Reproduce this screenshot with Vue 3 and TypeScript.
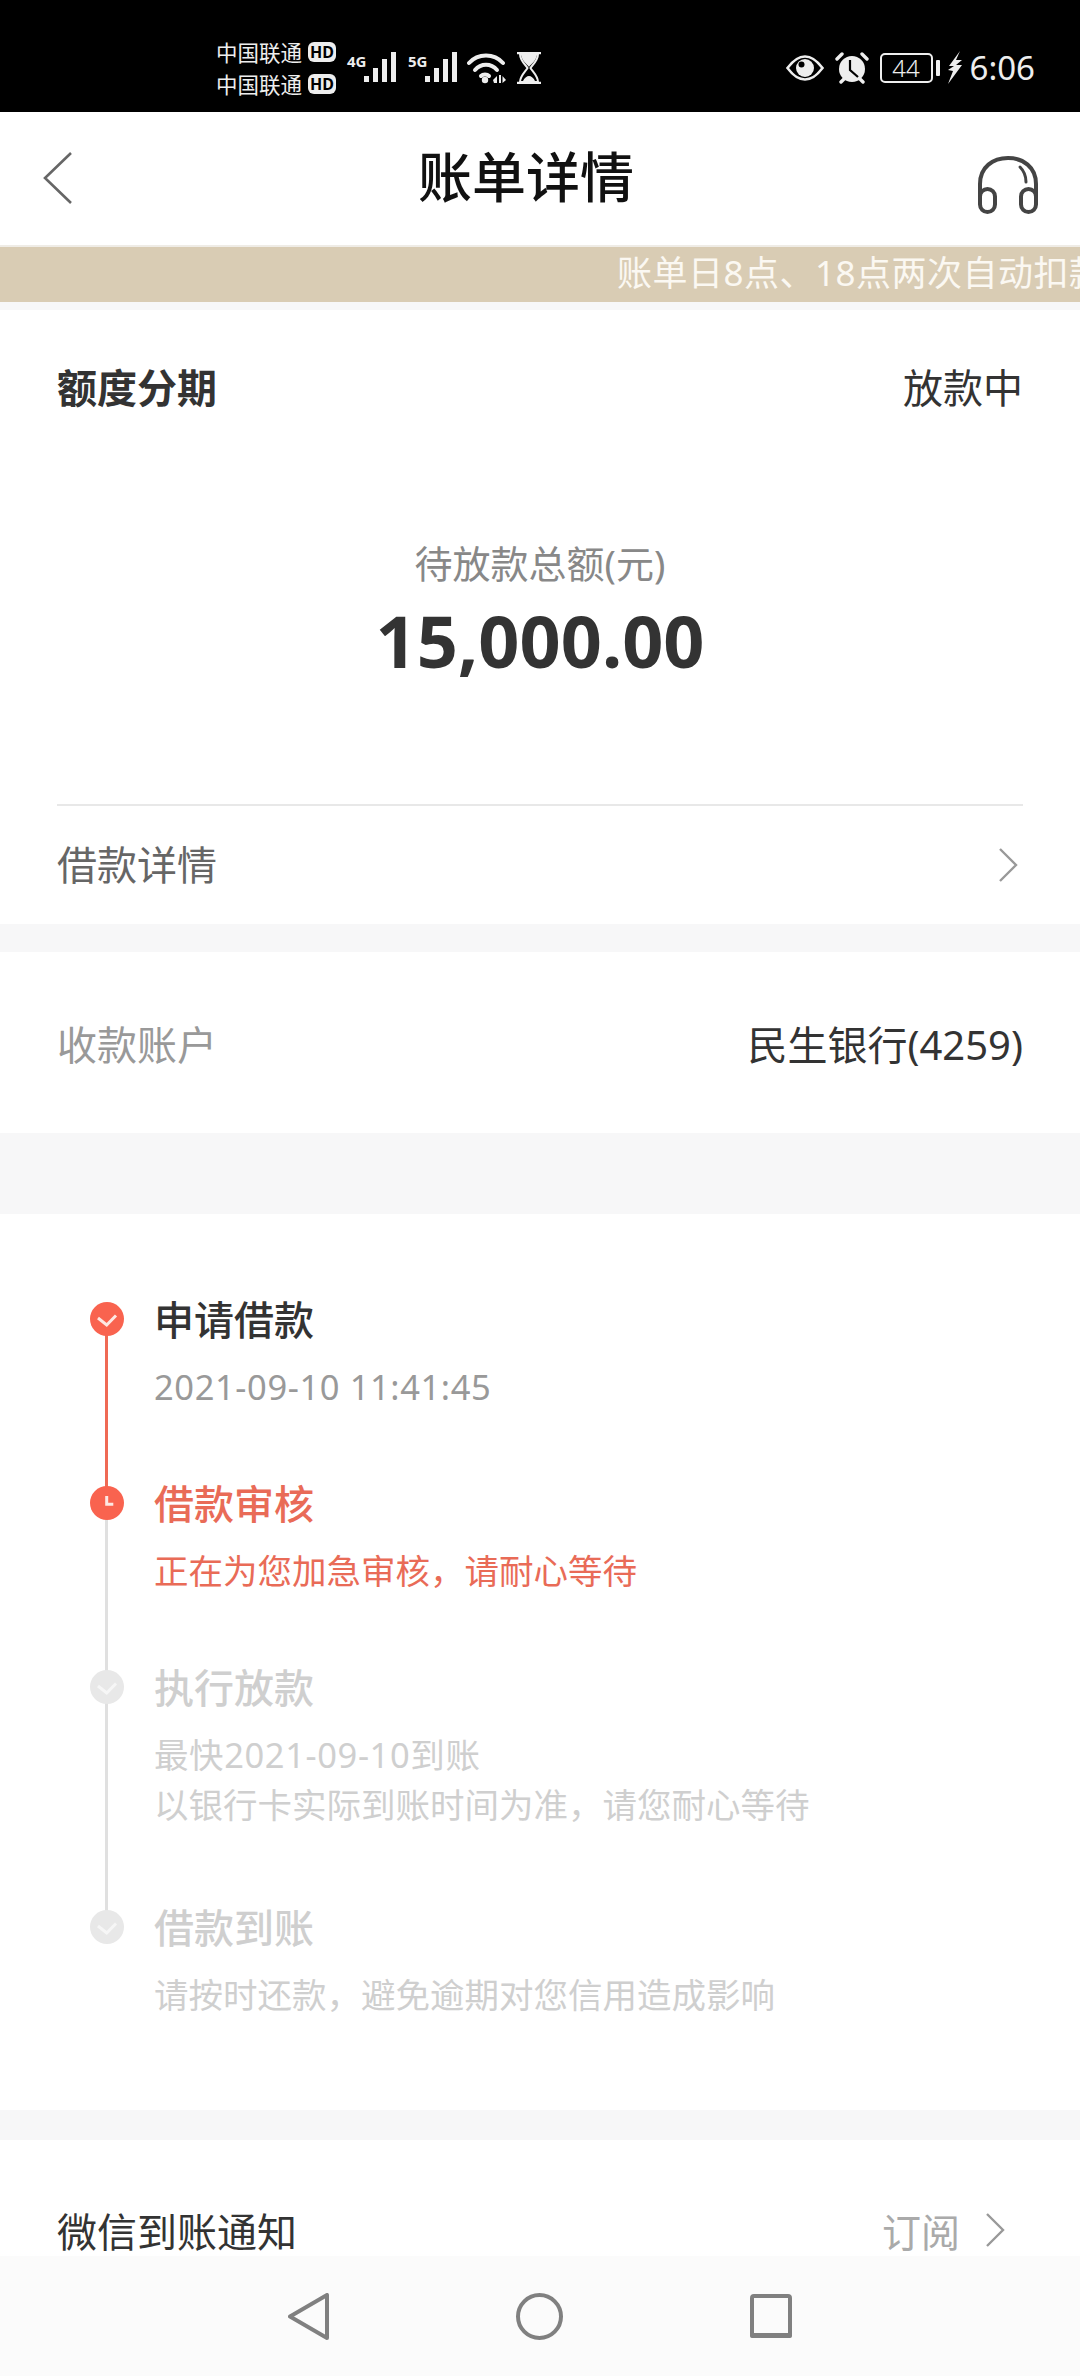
<script setup lang="ts">
interface Step { title: string; lines: string[]; state: 'done' | 'active' | 'todo'; pad: number; lineClass: string }
const steps: Step[] = [
  { title: '申请借款', lines: ['2021-09-10 11:41:45'], state: 'done', pad: 67, lineClass: 'red' },
  { title: '借款审核', lines: ['正在为您加急审核，请耐心等待'], state: 'active', pad: 67, lineClass: 'grey' },
  { title: '执行放款', lines: ['最快2021-09-10到账', '以银行卡实际到账时间为准，请您耐心等待'], state: 'todo', pad: 73, lineClass: 'grey' },
  { title: '借款到账', lines: ['请按时还款，避免逾期对您信用造成影响'], state: 'todo', pad: 0, lineClass: '' },
]
const hasDigits = (s: string): boolean => /\d/.test(s)
</script>

<template>
  <div class="screen">
    <div class="status">
      <div class="carriers">
        <div class="carrier">中国联通<span class="hd">HD</span></div>
        <div class="carrier">中国联通<span class="hd">HD</span></div>
      </div>
      <div class="net">
        <span class="gen">4G</span>
        <svg width="34" height="32" viewBox="0 0 34 32"><g fill="#eee"><rect x="0" y="24" width="5" height="6"/><rect x="9" y="16" width="5" height="14"/><rect x="18" y="7" width="5" height="23"/><rect x="27" y="0" width="5" height="30"/></g></svg>
      </div>
      <div class="net second">
        <span class="gen">5G</span>
        <svg width="34" height="32" viewBox="0 0 34 32"><g fill="#eee"><rect x="0" y="24" width="5" height="6"/><rect x="9" y="16" width="5" height="14"/><rect x="18" y="7" width="5" height="23"/><rect x="27" y="0" width="5" height="30"/></g></svg>
      </div>
      <svg class="wifi" width="40" height="32" viewBox="0 0 40 32">
        <g fill="none" stroke="#eee" stroke-width="4" stroke-linecap="round">
          <path d="M2 11 C11 1 27 1 36 11"/><path d="M8 18 C14 11 24 11 30 18"/><path d="M14 24 C16 22 20 22 22 24"/>
        </g>
        <circle cx="18" cy="28" r="3.2" fill="#eee"/>
        <path d="M26 28 L30 24 V31 H27 Z M32 23 H34 V31 H32 Z M35.500 24 L39 28 L35.500 31 Z" fill="#eee"/>
      </svg>
      <svg class="glass" width="24" height="32" viewBox="0 0 24 32">
        <path d="M0 1 H24 M0 31 H24" stroke="#eee" stroke-width="2.4"/>
        <path d="M3 2 H21 C21 9 15 13 13.500 16 C15 19 21 24 21 30 H3 C3 24 9 19 10.500 16 C9 13 3 9 3 2 Z" fill="none" stroke="#eee" stroke-width="2"/>
        <path d="M4 3 H20 C19 9 14 12 12 15 C10 12 5 9 4 3 Z M6 29 C7 26 10 24 12 24 C14 24 17 26 18 29 Z" fill="#eee"/>
      </svg>
      <div class="spacer"></div>
      <svg class="eye" width="38" height="26" viewBox="0 0 38 26">
        <path d="M1.500 13 C9 3 14 1.500 19 1.500 C24 1.500 29 3 36.500 13 C29 23 24 24.500 19 24.500 C14 24.500 9 23 1.500 13 Z" fill="none" stroke="#eee" stroke-width="2.6"/>
        <circle cx="19" cy="13" r="9" fill="#eee"/><circle cx="15.500" cy="9.500" r="3" fill="#000"/>
      </svg>
      <svg class="alarm" width="36" height="32" viewBox="0 0 36 32">
        <circle cx="18" cy="17" r="13" fill="#eee"/>
        <path d="M3 7 L8 2 M33 7 L28 2 M7 30 L10 27 M29 30 L26 27" stroke="#eee" stroke-width="3.4" stroke-linecap="round"/>
        <path d="M16 8 V18 L24 25" fill="none" stroke="#000" stroke-width="2.2"/>
      </svg>
      <div class="battery"><span class="level">44</span></div>
      <span class="nub"></span>
      <svg class="bolt" width="16" height="34" viewBox="0 0 16 34"><path d="M13 0 L2 15 L7 15 L1 19 L6 20 L1 33 L15 14 L9 14 L15 9 L9 9 Z" fill="#eee"/></svg>
      <span class="time">6:06</span>
    </div>

    <header class="topbar">
      <svg class="back" width="32" height="54" viewBox="0 0 32 54"><path d="M30 2 L4 27 L30 52" fill="none" stroke="#666" stroke-width="2.6"/></svg>
      <h1 class="title">账单详情</h1>
      <svg class="phones" width="62" height="58" viewBox="0 0 62 58">
        <g fill="none" stroke="#444" stroke-width="4" stroke-linecap="round">
          <path d="M3 42 V28 C3 11 16 2 31 2 C46 2 59 11 59 28 V42"/>
          <path d="M43 11 C47 15 49 20 49 26" stroke-width="3"/>
          <rect x="3" y="33" width="15" height="23" rx="7.500"/>
          <rect x="44" y="33" width="15" height="23" rx="7.500"/>
        </g>
      </svg>
    </header>

    <div class="notice"><span class="notice-text">账单日8点、18点两次自动扣款</span></div>

    <section class="card summary">
      <div class="summary-head">
        <span class="kind">额度分期</span>
        <span class="state">放款中</span>
      </div>
      <div class="amount-label">待放款总额(元)</div>
      <div class="amount">15,000.00</div>
      <div class="detail-row">
        <span class="detail-text">借款详情</span>
        <svg width="20" height="36" viewBox="0 0 20 36"><path d="M2 2 L18 18 L2 34" fill="none" stroke="#999" stroke-width="2.4"/></svg>
      </div>
    </section>

    <section class="card account">
      <span class="account-label">收款账户</span>
      <span class="account-value">民生银行(4259)</span>
    </section>

    <section class="card timeline">
      <div v-for="s in steps" :key="s.title" class="step" :class="s.state" :style="{ paddingBottom: s.pad + 'px' }">
        <div class="rail" :class="s.lineClass"></div>
        <svg class="dot" width="34" height="34" viewBox="0 0 34 34">
          <circle cx="17" cy="17" r="17" :fill="s.state === 'todo' ? '#e8e8e8' : '#f9634f'"/>
          <path v-if="s.state === 'active'" d="M16.700 10 V18.300 H23.300" fill="none" stroke="#fde8e3" stroke-width="3"/>
          <path v-else d="M8 16 L16.700 23 L26 13.500" fill="none" :stroke="s.state === 'todo' ? '#f6f6f6' : '#fde8e3'" stroke-width="3"/>
        </svg>
        <div class="step-title">{{ s.title }}</div>
        <div class="step-lines">
          <div v-for="l in s.lines" :key="l" class="step-line" :class="{ digits: hasDigits(l) }">{{ l }}</div>
        </div>
      </div>
    </section>

    <section class="card wechat">
      <span class="wechat-label">微信到账通知</span>
      <span class="wechat-right">
        <span class="sub">订阅</span>
        <svg width="20" height="36" viewBox="0 0 20 36"><path d="M2 2 L18 18 L2 34" fill="none" stroke="#999" stroke-width="2.4"/></svg>
      </span>
    </section>

    <nav class="navbar">
      <svg width="41" height="47" viewBox="0 0 41 47"><path d="M39 2 V45 L2 23.500 Z" fill="none" stroke="#808080" stroke-width="4" stroke-linejoin="round"/></svg>
      <svg width="47" height="47" viewBox="0 0 47 47"><circle cx="23.500" cy="23.500" r="21.500" fill="none" stroke="#808080" stroke-width="4"/></svg>
      <svg width="42" height="44" viewBox="0 0 42 44"><rect x="2" y="2" width="38" height="40" rx="2" fill="none" stroke="#808080" stroke-width="4"/><rect x="0" y="39" width="42" height="5" rx="2" fill="#808080"/></svg>
    </nav>
  </div>
</template>

<style>
html, body { margin: 0; background: #f7f7f8; }
</style>

<style scoped>
.screen {
  position: relative;
  width: 1080px;
  height: 2376px;
  overflow: hidden;
  background: #f7f7f8;
  font-family: "Noto Sans", "Noto Sans CJK SC", sans-serif;
}
.status {
  height: 112px;
  background: #000;
  color: #eee;
  display: flex;
  align-items: center;
  box-sizing: border-box;
  padding: 24px 45px 0 216px;
}
.carriers { display: flex; flex-direction: column; gap: 7px; width: 120px; flex: none; }
.carrier { display: flex; align-items: center; font-size: 21.500px; line-height: 25px; white-space: nowrap; }
.hd {
  margin-left: 6px;
  width: 28px;
  height: 20px;
  text-align: center;
  background: #eee;
  color: #000;
  border-radius: 6px;
  font-size: 16px;
  font-weight: 700;
  line-height: 20px;
}
.net { display: flex; align-items: flex-start; margin-left: 11px; height: 32px; }
.net.second { margin-left: 10px; }
.gen { font-size: 15px; font-weight: 700; line-height: 18px; width: 17px; }
.wifi { margin-left: 8px; }
.glass { margin-left: 10px; }
.spacer { flex: 1; }
.eye { margin-right: 10px; }
.alarm { margin-right: 10px; }
.battery {
  width: 53px;
  height: 30px;
  box-sizing: border-box;
  border: 2.400px solid #eee;
  border-radius: 5px;
  display: flex;
  align-items: center;
  justify-content: center;
}
.level { font-size: 24px; line-height: 26px; font-weight: 300; }
.nub { width: 4px; height: 16px; background: #eee; margin-left: 3px; border-radius: 1px; }
.bolt { margin-left: 7px; }
.time { margin-left: 7px; font-size: 33px; line-height: 40px; }

.topbar {
  height: 133px;
  background: #fff;
  display: flex;
  align-items: center;
  padding: 0 41px;
  border-bottom: 2px solid #efece6;
}
.back { margin-bottom: 1px; }
.phones { margin: 12px 0 0 auto; }
.title {
  margin: 0 0 4px 345px;
  font-size: 54px;
  line-height: 70px;
  font-weight: 500;
  color: #111;
}
.notice {
  height: 55px;
  background: #d9ccb4;
  overflow: hidden;
  display: flex;
  align-items: center;
  padding-left: 617px;
  white-space: nowrap;
}
.notice-text { font-size: 35px; letter-spacing: 0.500px; color: #fbf8f2; line-height: 50px; padding-bottom: 3px; }

.card { background: #fff; }
.summary { margin-top: 8px; height: 614px; padding: 0 57px; box-sizing: border-box; display: flex; flex-direction: column; }
.summary-head { display: flex; justify-content: space-between; align-items: center; height: 56px; margin-top: 48px; }
.kind { font-size: 40px; font-weight: 700; color: #333; }
.state { font-size: 40px; color: #333; }
.amount-label { margin-top: 124px; text-align: center; font-size: 38px; line-height: 50px; color: #888; }
.amount { margin-top: 4px; text-align: center; font-size: 72px; line-height: 96px; font-weight: 700; color: #333; }
.detail-row {
  margin-top: auto;
  height: 120px;
  border-top: 2px solid #e8e8e8;
  display: flex;
  justify-content: space-between;
  align-items: center;
  padding-right: 5px;
  box-sizing: border-box;
}
.detail-text { font-size: 40px; color: #666; padding-bottom: 5px; }
.account {
  margin-top: 28px;
  height: 181px;
  padding: 0 57px;
  display: flex;
  justify-content: space-between;
  align-items: center;
  box-sizing: border-box;
}
.account-label { font-size: 40px; color: #999; }
.account-value { font-size: 40px; color: #333; }

.timeline { margin-top: 81px; height: 896px; box-sizing: border-box; padding: 81px 0 0 154px; }
.step { position: relative; }
.rail { position: absolute; left: -49px; top: 24px; bottom: -24px; width: 3px; }
.rail.red { background: #ef6a55; }
.rail.grey { background: #e0e0e0; }
.dot { position: absolute; left: -64px; top: 7px; }
.step-title { font-size: 40px; line-height: 50px; color: #333; font-weight: 500; }
.step-lines { margin-top: 17px; }
.step-line { font-size: 34.500px; line-height: 50px; color: #999; }
.step-line.digits { letter-spacing: 0.600px; }
.active .step-title { color: #e96b57; }
.active .step-line { color: #e96b57; }
.todo .step-title { color: #cfcfcf; }
.todo .step-line { color: #cfcfcf; }

.wechat {
  margin-top: 30px;
  height: 236px;
  padding: 64px 57px 0;
  display: flex;
  justify-content: space-between;
  align-items: flex-start;
  box-sizing: border-box;
}
.wechat-label { font-size: 40px; line-height: 56px; color: #333; }
.wechat-right { display: flex; align-items: center; gap: 25px; padding-right: 18px; height: 52px; }
.sub { font-size: 39px; color: #aaa; }
.navbar {
  position: absolute;
  left: 0;
  right: 0;
  bottom: 0;
  height: 120px;
  background: #fbfbfb;
  display: flex;
  align-items: center;
  padding-left: 288px;
  gap: 187px;
}
</style>
